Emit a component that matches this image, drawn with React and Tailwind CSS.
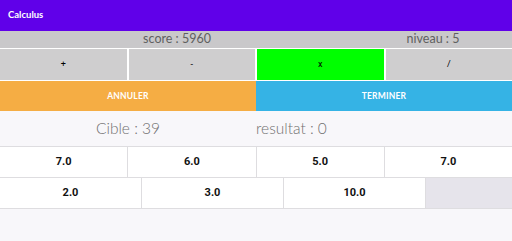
import React from "react";

export default function App() {
  const ops = [
    { t: "+", bg: "bg-[#cfcecf]" },
    { t: "-", bg: "bg-[#cfcecf]" },
    { t: "x", bg: "bg-[#00ff00]" },
    { t: "/", bg: "bg-[#cfcecf]" },
  ];
  const row1 = ["7.0", "6.0", "5.0", "7.0"];
  const row2 = [
    { t: "2.0", w: "w-[141px]" },
    { t: "3.0", w: "w-[142px]" },
    { t: "10.0", w: "w-[142px]" },
  ];
  return (
    <div className="w-[512px] h-[241px] bg-[#f8f7fa] flex flex-col overflow-hidden" style={{ fontFamily: "Lato, 'Open Sans', sans-serif" }}>
      <div className="h-[31px] bg-[#6000e9] flex items-center px-2">
        <span className="text-white text-[9.5px] font-bold">Calculus</span>
      </div>
      <div className="h-[17px] bg-[#c9c8ca] flex items-center text-[12.5px] text-[#606060]">
        <div className="w-[354px] text-center">score : 5960</div>
        <div className="flex-1 text-center">niveau : 5</div>
      </div>
      <div className="h-[33px] bg-white flex gap-[2px] pt-[1px] pb-[1px]">
        {ops.map((o, i) => (
          <div key={i} className={`flex-1 ${o.bg} flex items-center justify-center text-[9px] text-black`} style={{ fontFamily: "Roboto, sans-serif" }}>
            {o.t}
          </div>
        ))}
      </div>
      <div className="h-[30px] flex">
        <div className="flex-1 bg-[#f5ad44] flex items-center justify-center text-white text-[8.5px] font-bold tracking-wide">ANNULER</div>
        <div className="flex-1 bg-[#35b3e5] flex items-center justify-center text-white text-[8.5px] font-bold tracking-wide">TERMINER</div>
      </div>
      <div className="h-[35px] flex items-center text-[15.5px] text-[#707070] font-light">
        <div className="w-[256px] text-center">Cible : 39</div>
        <div className="flex-1">resultat : 0</div>
      </div>
      <div className="flex flex-col" style={{ fontFamily: "Roboto, sans-serif" }}>
        <div className="h-[32px] flex border-y border-[#dedde0]">
          {row1.map((t, i) => (
            <div key={i} className={`flex-1 bg-white flex items-center justify-center text-[11px] font-bold text-[#111] ${i > 0 ? "border-l border-[#dedde0]" : ""}`}>
              {t}
            </div>
          ))}
        </div>
        <div className="h-[31px] flex border-b border-[#dedde0]">
          {row2.map((c, i) => (
            <div key={i} className={`${c.w} bg-white flex items-center justify-center text-[11px] font-bold text-[#111] ${i > 0 ? "border-l border-[#dedde0]" : ""}`}>
              {c.t}
            </div>
          ))}
          <div className="flex-1 bg-[#e6e4eb] border-l border-[#dedde0]" />
        </div>
      </div>
    </div>
  );
}
